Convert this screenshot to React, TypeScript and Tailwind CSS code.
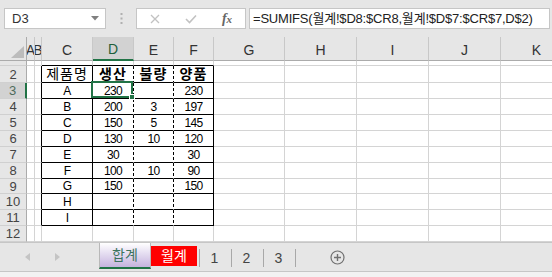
import React from "react";

const FONT = "[font-family:'Liberation_Sans','Noto_Sans_CJK_KR',sans-serif]";

// column letter, grid width comes from the template below
const COLS = ["#", "A", "B", "C", "D", "E", "F", "G", "H", "I", "J", "K"];
const ROWS = [1, 2, 3, 4, 5, 6, 7, 8, 9, 10, 11, 12, 13];

const DATA: Record<number, string[]> = {
  2: ["제품명", "생산", "불량", "양품"],
  3: ["A", "230", "", "230"],
  4: ["B", "200", "3", "197"],
  5: ["C", "150", "5", "145"],
  6: ["D", "130", "10", "120"],
  7: ["E", "30", "", "30"],
  8: ["F", "100", "10", "90"],
  9: ["G", "150", "", "150"],
  10: ["H", "", "", ""],
  11: ["I", "", "", ""],
};

const TABLE_COLS = ["C", "D", "E", "F"];

function inTable(r: number) {
  return r >= 2 && r <= 11;
}

function Cell({ r, c }: { r: number; c: string }) {
  if (c === "#") {
    const sel = r === 3;
    return (
      <div
        className={
          "flex items-center justify-center border-b border-b-[#d0d0d0] text-[13px] leading-none " +
          (sel
            ? "bg-[#d2d2d2] text-[#4f6b5c] border-r-2 border-r-[#217346]"
            : "bg-[#e6e6e6] text-[#444] border-r border-r-[#ababab]")
        }
      >
        {r === 1 ? "" : r}
      </div>
    );
  }

  const ti = TABLE_COLS.indexOf(c);
  const t = inTable(r);
  const dotted = t && (c === "D" || c === "E");
  let cls = "relative flex items-center justify-center border-r border-b border-[#d4d4d4] bg-white text-[12px] leading-none text-black";

  if (t && (c === "B" || c === "C" || c === "F")) cls += " border-r-black";
  if (dotted) cls += " border-r-white";
  if (ti >= 0 && r >= 1 && r <= 11) cls += " border-b-black";
  if (r === 2 && ti > 0) cls += " bg-[#ccffff] font-bold text-[14px]";
  if (r === 2 && ti === 0) cls += " text-[14px]";

  const text = ti >= 0 && DATA[r] ? DATA[r][ti] : "";

  return (
    <div className={cls}>
      <span className={r === 2 ? "tracking-[1px]" : "tracking-[-0.6px]"}>{text}</span>
      {dotted && (
        <div className="absolute top-0 bottom-0 right-[-1px] w-px bg-[repeating-linear-gradient(to_bottom,#000_0px,#000_3px,transparent_3px,transparent_5px)]" />
      )}
      {r === 3 && c === "D" && (
        <div className="absolute left-[-2px] top-[-2px] right-0 bottom-0 z-10 border-2 border-[#217346]">
          <div className="absolute right-[-4px] bottom-[-4px] h-[6px] w-[6px] border border-white bg-[#217346]" />
        </div>
      )}
    </div>
  );
}

function ColHeader({ c }: { c: string }) {
  if (c === "#") {
    return (
      <div className="relative border-r border-b border-r-[#ababab] border-b-[#ababab] bg-[#e6e6e6]">
        <svg className="absolute left-[11px] top-[9px]" width="13" height="12" viewBox="0 0 13 12">
          <polygon points="13,0 13,12 0,12" fill="#bcbcbc" />
        </svg>
      </div>
    );
  }
  const sel = c === "D";
  return (
    <div
      className={
        "flex items-center justify-center overflow-hidden border-r border-r-[#c8c8c8] text-[14px] leading-none " +
        (sel
          ? "bg-[#d2d2d2] text-[#1e5e3a] border-b-2 border-b-[#217346]"
          : "bg-[#e6e6e6] text-[#333] border-b border-b-[#ababab]")
      }
    >
      <span className="pt-[2px]">{c}</span>
    </div>
  );
}

function FormulaBar() {
  return (
    <div className="flex h-[37px] items-start bg-[#e6e6e6] pt-[8px]">
      <div className="ml-[4px] flex h-[21px] w-[102px] items-center justify-between border border-[#c6c6c6] bg-white pl-[7px] pr-[6px] text-[13px] text-[#333]">
        <span>D3</span>
        <svg width="8" height="5" viewBox="0 0 8 5">
          <polygon points="0,0 8,0 4,4.5" fill="#808080" />
        </svg>
      </div>
      <div className="flex h-[21px] w-[30px] items-center justify-center">
        <svg width="3" height="11" viewBox="0 0 3 11">
          <rect x="0.5" y="0" width="2" height="2" fill="#b0b0b0" />
          <rect x="0.5" y="4.5" width="2" height="2" fill="#b0b0b0" />
          <rect x="0.5" y="9" width="2" height="2" fill="#b0b0b0" />
        </svg>
      </div>
      <div className="flex h-[21px] w-[110px] items-center border border-[#c6c6c6] bg-white">
        <div className="flex w-[36px] justify-center">
          <svg width="10" height="10" viewBox="0 0 10 10">
            <path d="M1 1 L9 9 M9 1 L1 9" stroke="#c2c2c2" strokeWidth="1.3" />
          </svg>
        </div>
        <div className="flex w-[36px] justify-center">
          <svg width="12" height="10" viewBox="0 0 12 10">
            <path d="M1 5 L4.5 8.5 L11 1.5" stroke="#c2c2c2" strokeWidth="1.6" fill="none" />
          </svg>
        </div>
        <div className="flex w-[36px] justify-center">
          <span className="[font-family:'Liberation_Serif',serif] text-[14px] font-bold italic leading-none text-[#666]">
            f<span className="text-[11px]">x</span>
          </span>
        </div>
      </div>
      <div className="ml-[3px] mr-[2px] flex h-[21px] flex-1 items-center overflow-hidden whitespace-nowrap border border-[#c6c6c6] bg-white pl-[3px] text-[13px] tracking-[-0.2px] text-[#222]">
        =SUMIFS(월계!$D8:$CR8,월계!$D$7:$CR$7,D$2)
      </div>
    </div>
  );
}

function TabBar() {
  return (
    <div className="flex h-[29px] items-start border-t border-[#c6c6c6] bg-[#e6e6e6]">
      <div className="flex h-[28px] w-[99px] items-center">
        <svg className="ml-[25px]" width="5" height="8" viewBox="0 0 5 8">
          <polygon points="5,0 5,8 0,4" fill="#c4c4c4" />
        </svg>
        <svg className="ml-[25px]" width="5" height="8" viewBox="0 0 5 8">
          <polygon points="0,0 0,8 5,4" fill="#c4c4c4" />
        </svg>
      </div>
      <div className="flex h-[26px] w-[52px] items-center justify-center border-x border-[#b8b8b8] border-b-2 border-b-[#217346] bg-gradient-to-b from-white to-[#c5b3de] text-[14px] text-[#3d745f]">
        합계
      </div>
      <div className="mt-[3px] flex h-[20px] w-[46px] items-center justify-center bg-[#ff0000] text-[14px] text-white">
        월계
      </div>
      {["1", "2", "3"].map((s) => (
        <div key={s} className="mt-[6px] ml-[2px] flex h-[18px] w-[30px] items-center justify-center border-l border-[#a8a8a8] text-[14px] text-[#444]">
          {s}
        </div>
      ))}
      <div className="mt-[6px] h-[18px] border-l border-[#a8a8a8] ml-[2px]" />
      <svg className="ml-[34px] mt-[7px]" width="15" height="15" viewBox="0 0 15 15">
        <circle cx="7.5" cy="7.5" r="6.5" fill="none" stroke="#707070" strokeWidth="1.2" />
        <path d="M7.5 4 V11 M4 7.5 H11" stroke="#707070" strokeWidth="1.4" />
      </svg>
    </div>
  );
}

export default function App() {
  return (
    <div className={"h-[277px] w-[552px] overflow-hidden bg-[#e6e6e6] " + FONT}>
      <FormulaBar />
      <div className="h-[205px] overflow-hidden bg-white">
        <div className="grid w-[573px] grid-cols-[27px_8px_7px_51px_41px_40px_40px_71px_72px_72px_72px_72px] grid-rows-[24px_5px_17px_16px_16px_16px_16px_16px_16px_15px_16px_16px_16px_16px]">
          {COLS.map((c) => (
            <ColHeader key={"h" + c} c={c} />
          ))}
          {ROWS.map((r) => COLS.map((c) => <Cell key={r + c} r={r} c={c} />))}
        </div>
      </div>
      <TabBar />
      <div className="h-[6px] border-t border-[#c6c6c6] bg-[#f2f2f2]" />
    </div>
  );
}
